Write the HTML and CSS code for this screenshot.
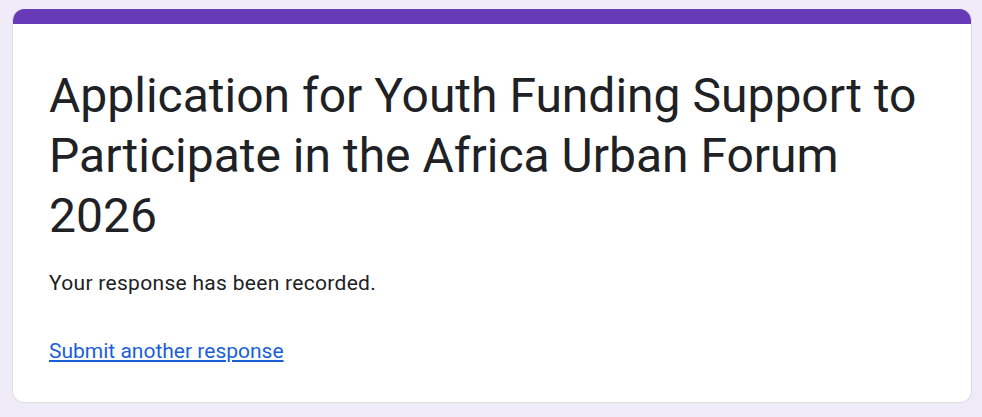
FILE: index.html
```html
<!DOCTYPE html>
<html lang="en">
<head>
<meta charset="utf-8">
<title>Application for Youth Funding Support</title>
<link rel="stylesheet" href="styles.css">
</head>
<body>
<div class="card">
  <div class="card-accent"></div>
  <div class="card-body">
    <h1 class="form-title">Application for Youth Funding Support to Participate in the Africa Urban Forum 2026</h1>
    <p class="confirm">Your response has been recorded.</p>
    <a class="again" href="#">Submit another response</a>
  </div>
</div>
</body>
</html>
```
FILE: styles.css
```css
html, body {
  margin: 0;
  padding: 0;
  background: #f0ebf8;
}
body {
  font-family: Roboto, "Liberation Sans", Arial, sans-serif;
  color: #202124;
  padding: 9px 10px 0 12px;
}
.card {
  width: 960px;
  box-sizing: border-box;
  background: #fff;
  border-radius: 12px;
  overflow: hidden;
  border: 1px solid #dadce0;
  border-top: none;
}
.card-accent {
  height: 15px;
  background: #673ab7;
  margin: 0 -1px;
}
.card-body {
  padding: 42px 36px 36px 36px;
  display: flex;
  flex-direction: column;
  align-items: flex-start;
}
.form-title {
  margin: 0;
  font-size: 48px;
  line-height: 60px;
  font-weight: 400;
  color: #202124;
}
.confirm {
  margin: 22px 0 0 0;
  font-size: 21px;
  line-height: 30px;
  letter-spacing: 0.3px;
}
.again {
  margin-top: 38px;
  font-size: 21px;
  line-height: 30px;
  color: #1a5fd6;
  text-decoration: underline;
}
```
